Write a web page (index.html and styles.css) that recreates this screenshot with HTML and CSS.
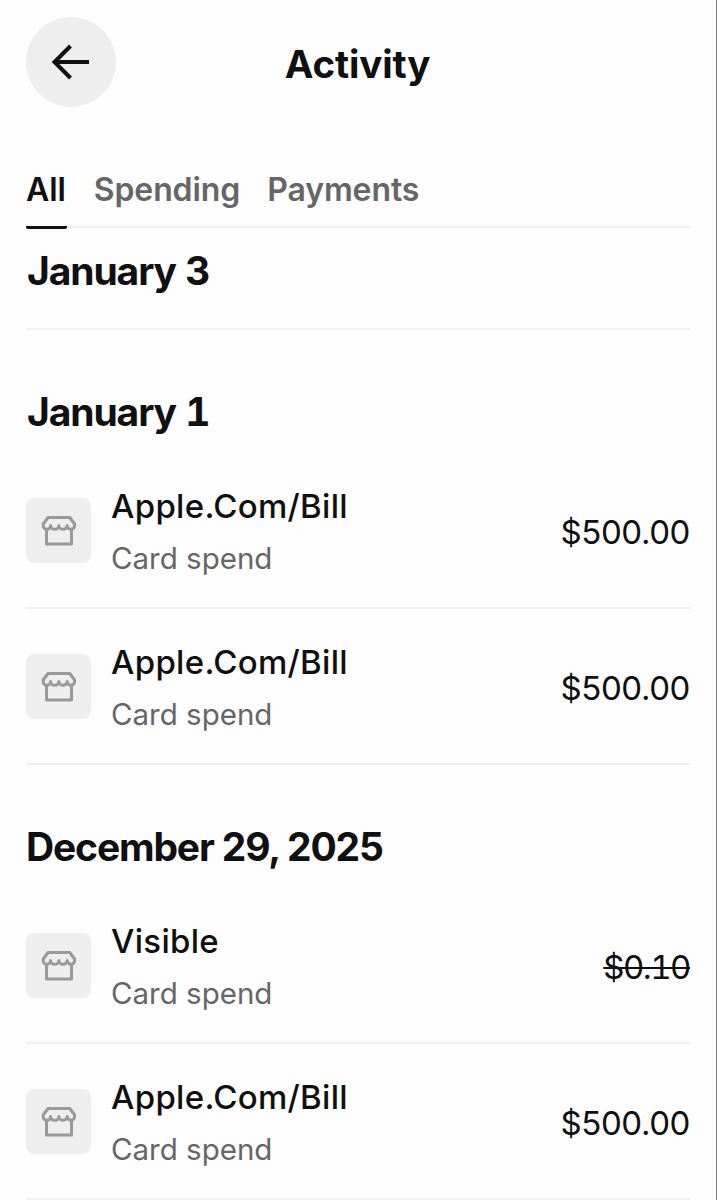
FILE: index.html
```html
<!doctype html>
<html lang="en">
<head>
<meta charset="utf-8">
<title>Activity</title>
<link rel="stylesheet" href="styles.css">
</head>
<body>

<svg class="sprite">
  <symbol id="store" viewBox="0 0 36 32">
    <path d="M5.500 13V29H30.500V13" />
    <path d="M7 2.500H28.800L33.600 9V10.500A3.700 3.800 0 0 1 26.200 10.500A4.100 3.800 0 0 1 17.900 10.500A4.100 3.800 0 0 1 9.600 10.500A3.700 3.800 0 0 1 2.200 10.500V9Z" />
  </symbol>
</svg>

<div class="screen">
  <header class="header">
    <button class="back" aria-label="Back">
      <svg viewBox="0 0 40 36"><path d="M38 18H3.500M19.500 2L3.500 18L19.500 34" /></svg>
    </button>
    <h1 class="title">Activity</h1>
  </header>

  <nav class="tabs">
    <a class="tab active">All</a>
    <a class="tab">Spending</a>
    <a class="tab">Payments</a>
  </nav>

  <section class="day short">
    <h2 class="date">January 3</h2>
  </section>

  <section class="day">
    <h2 class="date">January 1</h2>
    <div class="row">
      <div class="icon"><svg><use href="#store" /></svg></div>
      <div class="info">
        <div class="name">Apple.Com/Bill</div>
        <div class="type">Card spend</div>
      </div>
      <div class="amount">$500.00</div>
    </div>
    <div class="row">
      <div class="icon"><svg><use href="#store" /></svg></div>
      <div class="info">
        <div class="name">Apple.Com/Bill</div>
        <div class="type">Card spend</div>
      </div>
      <div class="amount">$500.00</div>
    </div>
  </section>

  <section class="day">
    <h2 class="date long">December 29, 2025</h2>
    <div class="row">
      <div class="icon"><svg><use href="#store" /></svg></div>
      <div class="info">
        <div class="name">Visible</div>
        <div class="type">Card spend</div>
      </div>
      <div class="amount declined">$0.10</div>
    </div>
    <div class="row">
      <div class="icon"><svg><use href="#store" /></svg></div>
      <div class="info">
        <div class="name">Apple.Com/Bill</div>
        <div class="type">Card spend</div>
      </div>
      <div class="amount">$500.00</div>
    </div>
  </section>
</div>

</body>
</html>
```
FILE: styles.css
```css
* {
  box-sizing: border-box;
}
body {
  margin: 0;
  overflow: hidden;
  background: #fdfdfd;
  color: #101010;
  font-family: Inter, "Liberation Sans", sans-serif;
}
.sprite {
  display: none;
}
.screen {
  height: 1200px;
  overflow: hidden;
  padding: 17px 26px 0;
  border-right: 1px solid #7c7c7c;
}
.header {
  display: grid;
  grid-template-columns: 90px 1fr 90px;
  align-items: center;
  height: 90px;
}
.back {
  display: flex;
  align-items: center;
  justify-content: center;
  width: 90px;
  height: 90px;
  padding: 0 1px 0 0;
  border: 0;
  border-radius: 50%;
  background: #eee;
}
.back svg {
  width: 40px;
  height: 36px;
  fill: none;
  stroke: #101010;
  stroke-width: 4;
}
.title {
  margin: 0;
  padding: 3px 1px 0 0;
  font-size: 38.5px;
  font-weight: 700;
  letter-spacing: -0.15px;
  line-height: 48px;
  text-align: center;
}
.tabs {
  display: flex;
  gap: 27px;
  height: 72px;
  margin-top: 49px;
  border-bottom: 2px solid #f0f0f0;
}
.tab {
  height: 73px;
  padding-top: 10px;
  color: #666;
  font-size: 32px;
  font-weight: 600;
  letter-spacing: -0.1px;
  line-height: 48px;
}
.tab.active {
  padding-right: 1px;
  color: #101010;
  border-bottom: 3px solid #101010;
  border-radius: 2px;
}
.date {
  margin: 0;
  padding: 58px 0 17px 1px;
  font-size: 39px;
  font-weight: 700;
  font-feature-settings: "tnum";
  letter-spacing: -1.1px;
  line-height: 48px;
}
.long {
  padding-left: 0;
  font-feature-settings: normal;
  letter-spacing: -1.15px;
}
.short {
  height: 102px;
  border-bottom: 2px solid #f0f0f0;
}
.short .date {
  padding-top: 19px;
}
.row {
  display: flex;
  align-items: center;
  height: 156px;
  border-bottom: 2px solid #f0f0f0;
  padding-top: 4px;
}
.icon {
  display: flex;
  align-items: center;
  justify-content: center;
  width: 65px;
  height: 65px;
  margin-bottom: 3px;
  border-radius: 8px;
  background: #eee;
}
.icon svg {
  width: 36px;
  height: 32px;
  fill: none;
  stroke: #999;
  stroke-width: 3;
  stroke-linejoin: round;
}
.info {
  flex: 1;
  margin-left: 20px;
  padding-bottom: 1px;
  line-height: 52px;
}
.name {
  font-size: 33px;
  font-weight: 550;
  letter-spacing: 0.3px;
}
.type {
  color: #666;
  font-size: 29.5px;
}
.amount {
  font-size: 33px;
  letter-spacing: -0.4px;
}
.declined {
  font-feature-settings: "tnum";
  letter-spacing: -1.5px;
  text-decoration: line-through 2px;
}
```
